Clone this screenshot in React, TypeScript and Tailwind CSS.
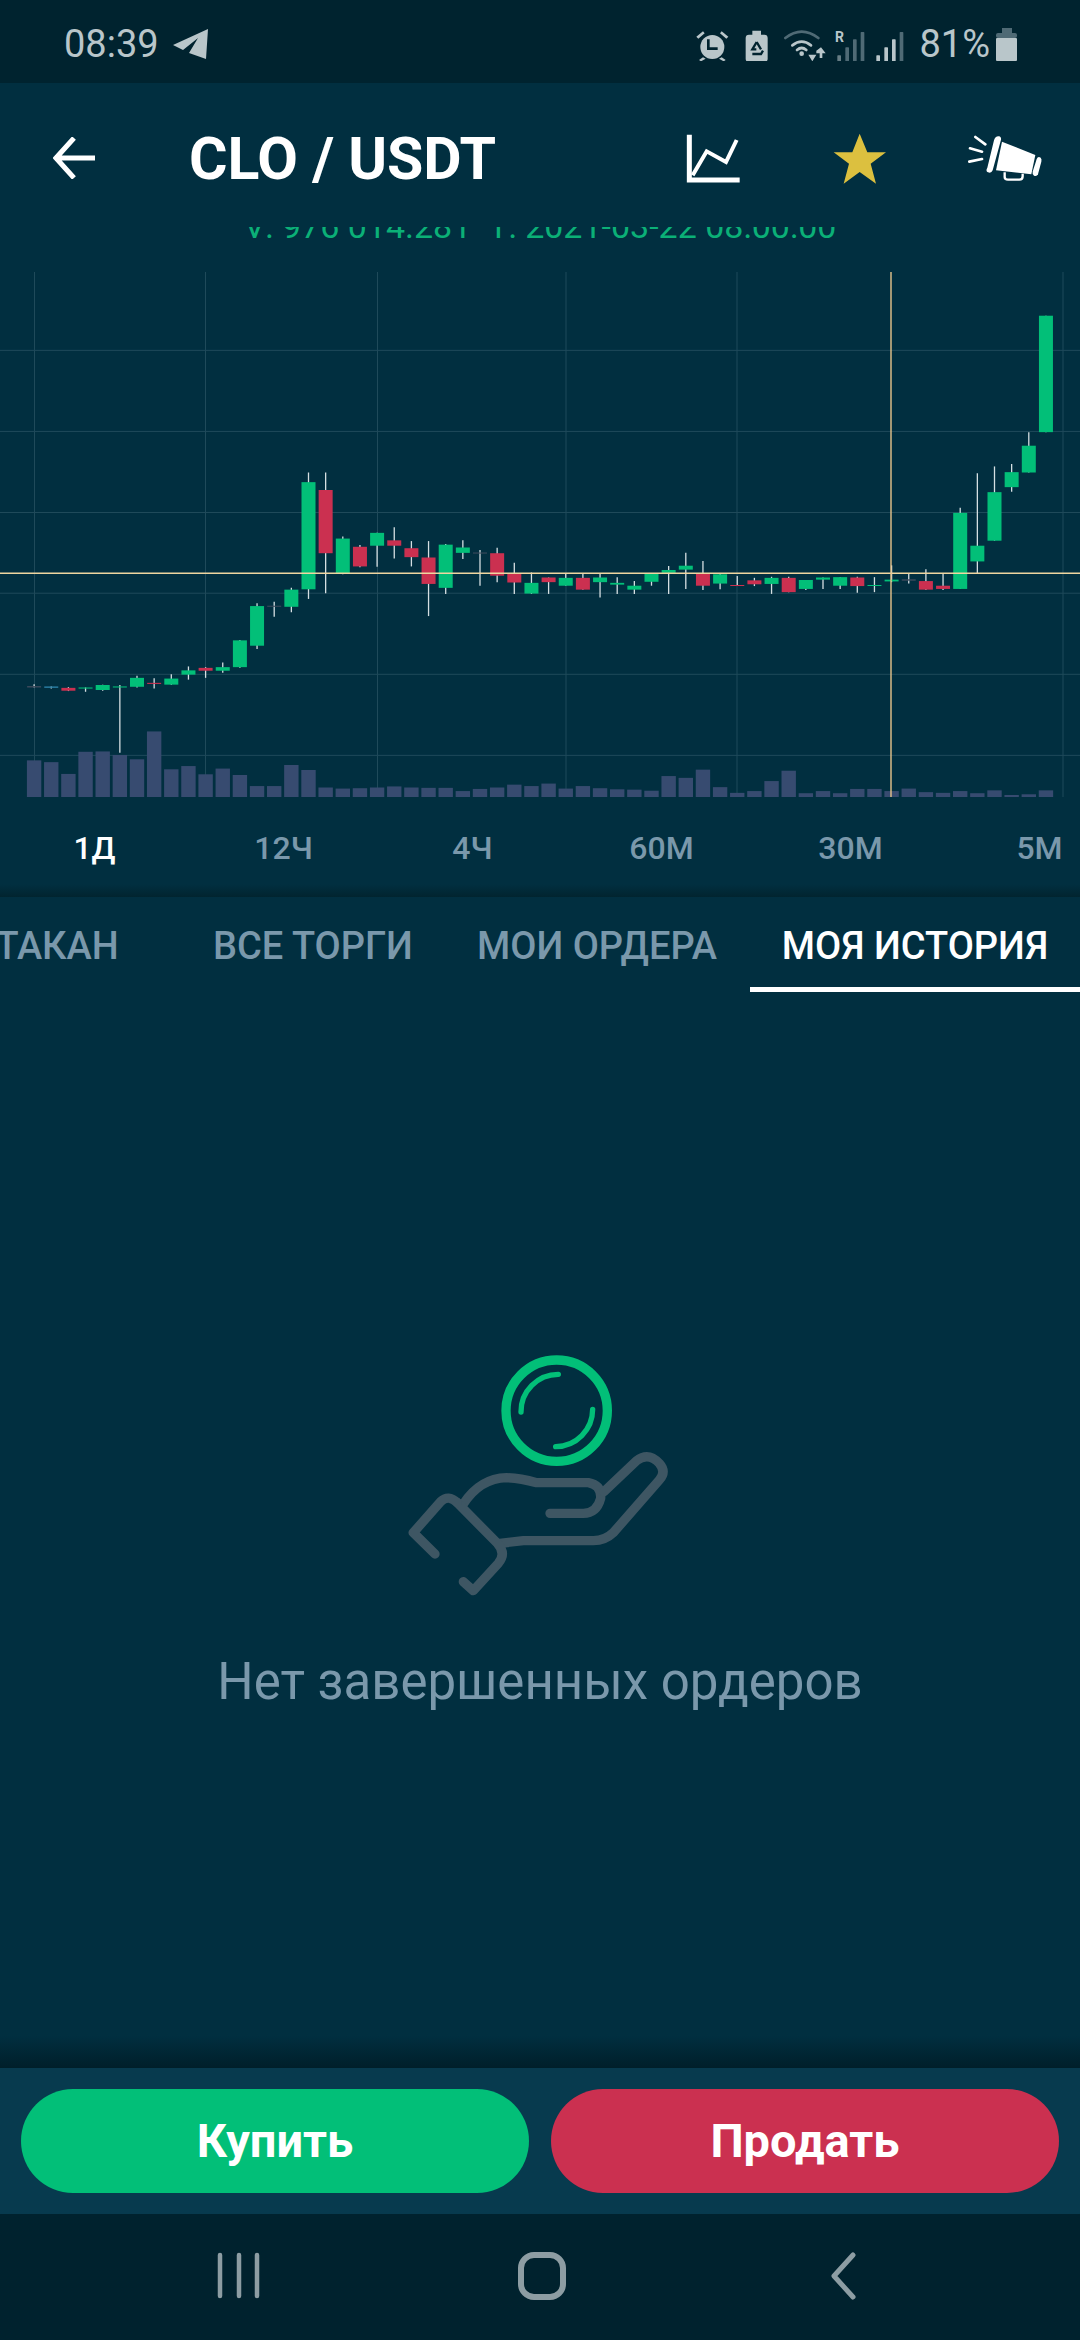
const GREEN = '#02bf78'
const RED = '#cb3050'
const DIM = '#3c4a5c'
const BLUE = '#2a7fa5'

// wick top, wick bottom, body top, body bottom, colour (chart units: 2.904 x 2.8 per px)
const candles: [number, number, number, number, string][] = [
  [1188, 1197, 1193, 1197, DIM], [1194, 1200, 1194, 1198, BLUE], [1196, 1207, 1198, 1206, RED],
  [1197, 1209, 1197, 1200, GREEN], [1189, 1206, 1190, 1204, GREEN], [1190, 1380, 1194, 1197, GREEN],
  [1164, 1197, 1170, 1195, GREEN], [1171, 1200, 1184, 1187, RED], [1160, 1189, 1172, 1189, GREEN],
  [1138, 1175, 1149, 1161, GREEN], [1140, 1170, 1142, 1150, RED], [1127, 1156, 1140, 1150, GREEN],
  [1064, 1142, 1065, 1140, GREEN], [961, 1089, 969, 1080, GREEN], [957, 999, 968, 971, DIM],
  [918, 986, 923, 971, GREEN], [595, 949, 622, 922, GREEN], [595, 933, 644, 821, RED],
  [774, 880, 780, 877, GREEN], [798, 860, 803, 858, RED], [764, 859, 764, 800, GREEN],
  [748, 836, 785, 800, RED], [787, 858, 807, 832, RED], [787, 997, 833, 907, RED],
  [795, 935, 797, 918, GREEN], [785, 837, 805, 820, GREEN], [812, 912, 819, 822, DIM],
  [806, 902, 821, 884, RED], [848, 935, 879, 903, RED], [875, 935, 904, 934, GREEN],
  [889, 935, 889, 902, RED], [878, 912, 890, 912, GREEN], [878, 923, 890, 923, RED],
  [878, 945, 889, 902, GREEN], [888, 935, 904, 909, GREEN], [899, 935, 912, 923, GREEN],
  [878, 912, 879, 901, GREEN], [857, 935, 868, 876, GREEN], [820, 921, 856, 867, GREEN],
  [843, 924, 879, 912, RED], [878, 922, 880, 906, GREEN], [885, 912, 910, 912, RED],
  [890, 913, 897, 908, RED], [887, 935, 890, 907, GREEN], [887, 930, 890, 930, RED],
  [896, 924, 896, 921, GREEN], [889, 921, 889, 895, GREEN], [888, 921, 888, 912, GREEN],
  [887, 932, 889, 913, RED], [888, 930, 910, 912, GREEN], [855, 902, 895, 900, GREEN],
  [878, 906, 894, 898, DIM], [866, 924, 899, 923, RED], [878, 924, 912, 921, RED],
  [694, 921, 708, 921, GREEN], [597, 877, 800, 844, GREEN], [578, 786, 650, 786, GREEN],
  [571, 649, 594, 636, GREEN], [482, 595, 520, 595, GREEN], [156, 482, 156, 482, GREEN],
]

const volumes = [
  1401, 1406, 1439, 1377, 1376, 1386, 1398, 1320, 1426, 1417, 1440, 1424, 1442, 1473, 1473,
  1414, 1428, 1477, 1480, 1479, 1477, 1474, 1477, 1478, 1478, 1487, 1481, 1477, 1469, 1473,
  1466, 1480, 1473, 1479, 1482, 1483, 1486, 1445, 1450, 1427, 1476, 1492, 1487, 1459, 1430,
  1493, 1487, 1493, 1481, 1481, 1487, 1480, 1490, 1492, 1487, 1493, 1485, 1498, 1496, 1485,
]

const gridX = [34.5, 205.5, 377.5, 566, 737, 1063]
const gridY = [253, 480, 707, 933, 1160, 1387]

const candleX = (i: number) => 34.1 + 17.15 * i
const py = (v: number) => v / 2.8

function Chart() {
  return (
    <svg width="1080" height="540" viewBox="0 0 1080 540" className="block">
      {gridX.map((x) => (
        <line key={x} x1={x} x2={x} y1="12" y2="537" stroke="#1f4a5a" strokeWidth="1" />
      ))}
      {gridY.map((y) => (
        <line key={y} x1="0" x2="1080" y1={py(y)} y2={py(y)} stroke="#1f4a5a" strokeWidth="1" />
      ))}
      {volumes.map((v, i) => (
        <rect key={i} x={candleX(i) - 7.2} y={py(v)} width="14.4" height={537 - py(v)} fill="#374b70" />
      ))}
      {candles.map(([wt, wb, bt, bb, color], i) => (
        <g key={i}>
          <line x1={candleX(i)} x2={candleX(i)} y1={py(wt)} y2={py(wb)} stroke="#d5dfe2" strokeWidth="1.3" />
          <rect
            x={candleX(i) - 7}
            y={py(bt)}
            width="14"
            height={Math.max(py(bb) - py(bt), 1)}
            fill={color}
          />
        </g>
      ))}
      <line x1="0" x2="1080" y1={py(877)} y2={py(877)} stroke="#efd6a0" strokeWidth="1.4" />
      <line x1="891" x2="891" y1="12" y2="537" stroke="#e9c58c" strokeWidth="1.4" />
    </svg>
  )
}

function StatusIcons() {
  // drawn in 3x units
  return (
    <svg width="222" height="33" viewBox="110 70 666 99" className="block">
      <g fill="#b9c6ca">
        <circle cx="162" cy="127" r="36" />
        <path d="M114 96 L134 80 L139 86 L120 102 Z M210 96 L190 80 L185 86 L204 102 Z" />
        <path d="M134 158 L122 166 L128 170 L142 162 Z M190 158 L202 166 L196 170 L182 162 Z" />
        <path d="M282 78 H308 V90 H318 Q328 90 328 100 V162 Q328 172 318 172 H272 Q262 172 262 162 V100 Q262 90 272 90 H282 Z" />
        <circle cx="430" cy="147" r="7" />
        <path d="M450 150 H474 L462 170 Z M474 138 L488 128 L502 146 H492 V160 H484 V146 H474 Z" />
        <rect x="537" y="152" width="11" height="18" rx="2" opacity="0.55" />
        <rect x="654" y="152" width="11" height="18" rx="2" />
        <rect x="678" y="128" width="11" height="42" rx="2" />
      </g>
      <path d="M150 104 V132 H178" fill="none" stroke="#00232f" strokeWidth="8" />
      <path d="M295 112 L282 134 H294 M295 112 L308 134 M282 148 H308 L314 138" fill="none" stroke="#00232f" strokeWidth="7" />
      <g fill="none" stroke="#b9c6ca" strokeLinecap="round">
        <path d="M402 122 Q430 100 458 122" strokeWidth="8" />
        <path d="M416 136 Q430 124 444 136" strokeWidth="8" />
        <path d="M381 100 Q430 62 480 100" strokeWidth="8" stroke="#4f6a75" />
      </g>
      <text x="530" y="112" fill="#b9c6ca" fontFamily="Roboto, sans-serif" fontWeight="700" fontSize="42">R</text>
      <g fill="#4f6a75">
        <rect x="561" y="128" width="11" height="42" rx="2" />
        <rect x="584" y="104" width="11" height="66" rx="2" />
        <rect x="607" y="82" width="11" height="88" rx="2" />
        <rect x="701" y="104" width="11" height="66" rx="2" fill="#b9c6ca" />
        <rect x="724" y="82" width="11" height="88" rx="2" />
      </g>
    </svg>
  )
}

function StatusBar() {
  return (
    <div className="h-[83px] bg-[#00232f] flex items-center justify-between pl-[64px] pr-[62px] text-[38px] leading-none text-[#b9c6ca] font-[Roboto,sans-serif] pt-[5px]">
      <div className="flex items-center gap-[14px]">
        <span>08:39</span>
        <svg width="35" height="30" viewBox="0 0 35 30">
          <path d="M35 0 L0 16 L10 21 L25 9 L16 24 L33 30 Z" fill="#b9c6ca" />
        </svg>
      </div>
      <div className="flex items-center">
        <StatusIcons />
        <span className="ml-[2px]">81%</span>
        <svg width="22" height="33" viewBox="0 0 22 33" className="ml-[6px]">
          <rect x="6" y="0" width="10" height="6" fill="#4f6a75" />
          <rect x="0" y="5" width="21" height="5" rx="2" fill="#4f6a75" />
          <rect x="0" y="10" width="21" height="23" rx="1" fill="#b9c6ca" />
        </svg>
      </div>
    </div>
  )
}

function Header() {
  return (
    <div className="h-[144px] flex items-center bg-[#012f40] relative z-10 pt-[6px]">
      <svg width="42" height="42" viewBox="0 0 42 42" className="ml-[53px]" fill="none" stroke="#ffffff" strokeWidth="5">
        <path d="M42 21 H3 M21 1 L3 21 L21 41" />
      </svg>
      <h1 className="ml-[94px] text-[59px] leading-none font-bold text-white font-[Roboto,sans-serif] tracking-[-0.2px]">
        CLO / USDT
      </h1>
      <svg width="54" height="49" viewBox="136 66 162 147" className="ml-[190px]" fill="none" stroke="#ffffff" strokeWidth="15">
        <path d="M146 68 V204 H297" />
        <path d="M156 190 L198 118 L256 150 L288 84" strokeWidth="12" />
      </svg>
      <svg width="54" height="51" viewBox="578 60 162 153" className="ml-[93px]">
        <path d="M658 62 L681 118 L737 118 L691 152 L707 212 L658 177 L610 212 L626 152 L580 118 L636 118 Z" fill="#dcc03f" />
      </svg>
      <svg width="74" height="46" viewBox="976 74 222 138" className="ml-[81px]" fill="#ffffff">
        <path d="M1054 90 Q1058 76 1070 78 Q1078 82 1074 92 L1050 180 Q1046 190 1036 186 Q1028 182 1034 172 Z" />
        <path d="M1078 94 L1178 134 L1166 192 L1060 180 Z" />
        <path d="M1182 146 Q1186 136 1194 142 Q1198 146 1196 154 L1186 192 Q1182 200 1174 196 Q1168 192 1170 184 Z" />
        <path d="M1086 186 V200 Q1086 208 1096 208 H1130 Q1140 208 1140 198 V190" fill="none" stroke="#ffffff" strokeWidth="7" />
        <path d="M998 80 L1028 102 M982 114 L1018 124 M980 154 L1018 146" fill="none" stroke="#ffffff" strokeWidth="8" strokeLinecap="round" />
      </svg>
    </div>
  )
}

const frames = ['1Д', '12Ч', '4Ч', '60М', '30М', '5М']

function Timeframes() {
  return (
    <div className="h-[97px] flex overflow-hidden bg-gradient-to-b from-[#012f40] from-[87%] to-[#01242f] font-[Roboto,sans-serif]">
      {frames.map((f, i) => (
        <div
          key={f}
          className={`w-[189px] shrink-0 text-center pt-[29px] text-[32px] leading-[38px] font-medium ${i === 0 ? 'text-white' : 'text-[#7a98ab]'}`}
        >
          {f}
        </div>
      ))}
    </div>
  )
}

const tabs = [
  { label: 'СТАКАН', w: 'w-[274px]' },
  { label: 'ВСЕ ТОРГИ', w: 'w-[262px]' },
  { label: 'МОИ ОРДЕРА', w: 'w-[306px]' },
  { label: 'МОЯ ИСТОРИЯ', w: 'w-[330px]' },
]

function Tabs() {
  return (
    <div className="h-[95px] flex justify-end overflow-hidden font-[Roboto,sans-serif]">
      {tabs.map((t, i) => (
        <div
          key={t.label}
          className={`${t.w} shrink-0 text-center pt-[27px] text-[38px] leading-[44px] font-medium ${
            i === 3 ? 'text-white border-b-[5px] border-white' : 'text-[#7a98ab]'
          }`}
        >
          {t.label}
        </div>
      ))}
    </div>
  )
}

function HandCoin() {
  return (
    <svg width="320" height="280" viewBox="0 0 960 840" fill="none" strokeLinecap="round" strokeLinejoin="round">
      <circle cx="530" cy="242" r="152" stroke={GREEN} strokeWidth="28" />
      <path d="M423 246 A112 112 0 0 1 535 133 M638 238 A112 112 0 0 1 527 350" stroke={GREEN} strokeWidth="16" />
      <g stroke="#3e5663" strokeWidth="28">
        <path d="M250 522 Q300 445 380 443 Q420 444 470 458 L625 458 Q665 465 662 505 Q650 550 610 550 L510 550" />
        <path d="M672 485 L770 392 Q805 365 838 400 Q860 425 838 450 L700 608 Q675 632 640 632 L430 632 L360 640" />
        <path d="M232 518 L352 640 Q380 670 355 700 L280 782 L250 755" />
        <path d="M232 518 Q205 492 182 515 L100 608 L165 672" />
      </g>
    </svg>
  )
}

export default function App() {
  return (
    <div className="w-[1080px] h-[2340px] flex flex-col bg-[#012f40] overflow-hidden">
      <StatusBar />
      <Header />
      <div className="h-[33px] overflow-hidden">
        <div className="-mt-[18px] text-center text-[34px] leading-[34px] text-[#0bb077] font-[Roboto,sans-serif]">
          V: 976 014.281&nbsp;&nbsp;T: 2021-03-22 08:00:00
        </div>
      </div>
      <Chart />
      <Timeframes />
      <Tabs />
      <div className="flex-1 flex flex-col items-center pt-[338px] bg-gradient-to-b from-[#012f40] from-[97%] to-[#001f2a]">
        <HandCoin />
        <p className="mt-[42px] text-[51px] leading-[60px] text-[#7a98ab] font-[Roboto,sans-serif]">
          Нет завершенных ордеров
        </p>
      </div>
      <div className="h-[146px] bg-[#073a4e] flex items-center px-[21px] gap-[22px] font-[Roboto,sans-serif]">
        <button className="flex-1 h-[104px] rounded-full bg-[#02bf78] text-white text-[47px] font-bold">Купить</button>
        <button className="flex-1 h-[104px] rounded-full bg-[#cb3050] text-white text-[47px] font-bold">Продать</button>
      </div>
      <div className="h-[126px] bg-[#00222e] relative flex justify-center">
        <svg width="1080" height="126" viewBox="0 0 1080 126" fill="none" stroke="#8d9da3" strokeLinecap="round" strokeLinejoin="round">
          <path d="M220 41 V82 M239 41 V82 M257 41 V82" strokeWidth="4.5" />
          <rect x="521" y="41" width="42" height="42" rx="13" strokeWidth="6" />
          <path d="M853 41 L834 62 L853 83" strokeWidth="5" />
        </svg>
      </div>
    </div>
  )
}
